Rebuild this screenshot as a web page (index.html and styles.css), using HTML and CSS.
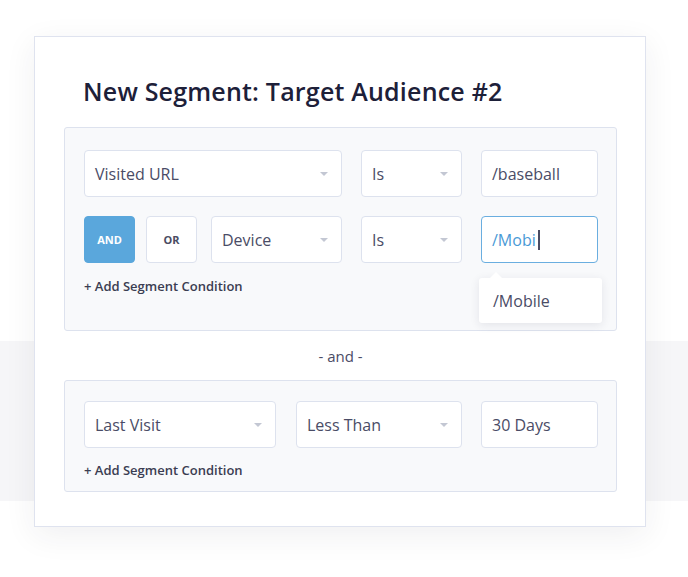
FILE: index.html
```html
<!DOCTYPE html>
<html lang="en">
<head>
    <meta charset="UTF-8">
    <meta name="viewport" content="width=device-width, initial-scale=1.0">
    <title>New Segment</title>
    <link rel="stylesheet" href="styles.css">
</head>
<body>
    <div class="card">
        <h1>New Segment: Target Audience #2</h1>

        <div class="panel panel-first">
            <div class="row">
                <div class="field select w-258">Visited URL<span class="arrow"></span></div>
                <div class="field select w-101">Is<span class="arrow"></span></div>
                <div class="field w-117">/baseball</div>
            </div>
            <div class="row">
                <div class="logic">
                    <button class="toggle active">AND</button>
                    <button class="toggle">OR</button>
                </div>
                <div class="field select w-132">Device<span class="arrow"></span></div>
                <div class="field select w-101">Is<span class="arrow"></span></div>
                <div class="field focus w-117">
                    /Mobi<span class="cursor"></span>
                    <div class="suggest">/Mobile</div>
                </div>
            </div>
            <div class="add">+ Add Segment Condition</div>
        </div>

        <div class="joiner">- and -</div>

        <div class="panel panel-second">
            <div class="row">
                <div class="field select w-192">Last Visit<span class="arrow"></span></div>
                <div class="field select w-166">Less Than<span class="arrow"></span></div>
                <div class="field w-117">30 Days</div>
            </div>
            <div class="add">+ Add Segment Condition</div>
        </div>
    </div>
</body>
</html>
```

FILE: styles.css
```css
body {
    margin: 0;
    padding: 36px 0 0 34px;
    font-family: "Open Sans", Lato, sans-serif;
    background: linear-gradient(to bottom, #fff 341px, #f6f6f8 341px, #f6f6f8 501px, #fff 501px);
    height: 577px;
    box-sizing: border-box;
}
.card {
    width: 612px;
    height: 491px;
    box-sizing: border-box;
    background: #fff;
    border: 1px solid #dfe3ef;
    box-shadow: 0 8px 30px rgba(40, 40, 60, 0.07);
    padding: 39px 28px 0 29px;
}
h1 {
    margin: 0 0 21px 19px;
    font-size: 25px;
    line-height: 30px;
    font-weight: 600;
    color: #1d2039;
    letter-spacing: 0.2px;
}
.panel {
    background: #f8f9fb;
    border: 1px solid #dde2ee;
    border-radius: 3px;
    width: 553px;
    box-sizing: border-box;
    padding: 0 18px 0 19px;
}
.panel-first {
    padding-top: 22px;
    padding-bottom: 35px;
}
.panel-second {
    padding-top: 20px;
    padding-bottom: 12px;
}
.row {
    display: flex;
    gap: 19px;
    margin-bottom: 19px;
}
.row + .add {
    margin-top: -5px;
}
.panel-second .row + .add {
    margin-top: -6px;
}
.logic {
    display: flex;
    gap: 11px;
    margin-right: -5px;
}
.toggle {
    width: 51px;
    height: 47px;
    border: 1px solid #dde2ee;
    border-radius: 4px;
    background: #fff;
    color: #4a4c63;
    font-family: "Open Sans", sans-serif;
    font-size: 11px;
    font-weight: 700;
    padding: 0;
}
.toggle.active {
    background: #5aa7dc;
    border-color: #5aa7dc;
    color: #fff;
}
.field {
    position: relative;
    height: 47px;
    box-sizing: border-box;
    background: #fff;
    border: 1px solid #dde2ee;
    border-radius: 4px;
    padding: 0 10px;
    display: flex;
    align-items: center;
    font-size: 16px;
    color: #4a4c66;
}
.w-258 { width: 258px; }
.w-101 { width: 101px; }
.w-117 { width: 117px; }
.w-132 { width: 131px; }
.w-192 { width: 192px; }
.w-166 { width: 166px; margin-left: 1px; }
.arrow {
    position: absolute;
    right: 13px;
    top: 21px;
    border-left: 4px solid transparent;
    border-right: 4px solid transparent;
    border-top: 4px solid #c3c7d3;
}
.focus {
    border-color: #6aaee0;
    color: #4a9ad6;
}
.cursor {
    display: inline-block;
    width: 2px;
    height: 20px;
    background: #4a4c63;
    margin-left: 2px;
}
.suggest {
    position: absolute;
    left: -3px;
    top: 61px;
    width: 123px;
    height: 45px;
    box-sizing: border-box;
    padding-left: 14px;
    display: flex;
    align-items: center;
    background: #fff;
    border-radius: 3px;
    box-shadow: 0 2px 10px rgba(40, 40, 70, 0.1);
    color: #4a4c66;
}
.suggest::before {
    content: "";
    position: absolute;
    left: 11px;
    top: -6px;
    border-left: 6px solid transparent;
    border-right: 6px solid transparent;
    border-bottom: 6px solid #fff;
}
.add {
    font-size: 13px;
    line-height: 18px;
    font-weight: 600;
    color: #3b3d52;
}
.joiner {
    height: 49px;
    display: flex;
    align-items: center;
    justify-content: center;
    width: 553px;
    font-size: 15px;
    color: #4a4c66;
}
```
